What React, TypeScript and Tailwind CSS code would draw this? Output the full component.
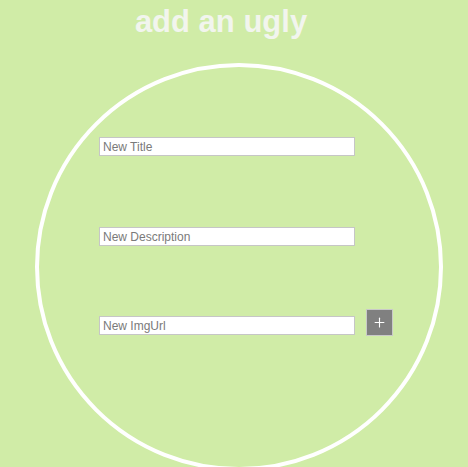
import { Plus } from 'lucide-react';

const inputClass =
  'block w-[256px] h-[19px] border border-[#c6c6c6] bg-white px-[3px] text-[12px] text-[#333] placeholder:text-[#7a7a7a] outline-none';

export default function App() {
  return (
    <div className="min-h-screen w-full bg-[#d0eca7] overflow-hidden font-['Liberation_Sans',Arial,sans-serif]">
      {/* Header */}
      <h1 className="pr-[26px] pt-[4px] text-center text-[31px] leading-[35px] font-bold text-[#f2f5ee]">
        add an ugly
      </h1>

      {/* Circle form */}
      <div className="ml-[35px] mt-[24px] w-[408px] h-[408px] rounded-full border-4 border-white">
        <div className="pl-[60px] pt-[70px] flex flex-col">
          <input className={inputClass} placeholder="New Title" />
          <input className={`${inputClass} mt-[71px]`} placeholder="New Description" />
          <div className="mt-[63px] flex items-end gap-[11px]">
            <input className={`${inputClass} mb-[1px]`} placeholder="New ImgUrl" />
            <button className="w-[27px] h-[27px] flex items-center justify-center bg-[#808080] border border-[#c9c9c9] text-white">
              <Plus className="w-[15px] h-[15px]" strokeWidth={1.75} />
            </button>
          </div>
        </div>
      </div>
    </div>
  );
}
